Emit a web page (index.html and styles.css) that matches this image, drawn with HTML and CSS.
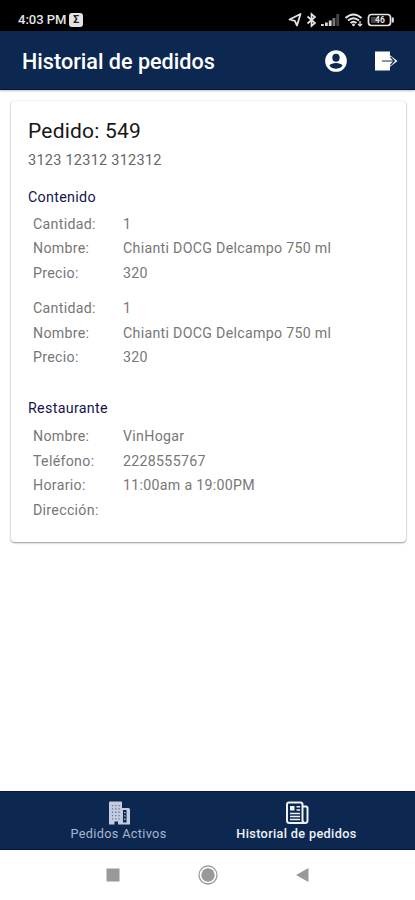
FILE: index.html
```html
<!DOCTYPE html>
<html lang="es">
<head>
    <meta charset="UTF-8">
    <meta name="viewport" content="width=device-width, initial-scale=1.0">
    <title>Historial de pedidos</title>
    <link rel="stylesheet" href="styles.css">
</head>
<body>
    <div class="screen">
        <!-- Status bar -->
        <div class="status-bar">
            <span class="time">4:03 PM</span>
            <span class="badge">Σ</span>
            <svg class="status-icons" width="108" height="16" viewBox="0 0 108 16" fill="none" stroke="#e4e4e4" stroke-width="1.4">
                <path d="M1.500 7.500L12.500 2L9 13.500L6.800 8.800Z" stroke-linejoin="round" stroke-width="1.800"/>
                <path d="M19.500 4.500L27 11L23.500 14V2L27 5L19.500 11.500" stroke-width="1.700"/>
                <g stroke="none" fill="#d8d8d8">
                    <rect x="33" y="12" width="2.800" height="2"/>
                    <rect x="37" y="10.500" width="2.800" height="3.500"/>
                    <rect x="40.800" y="8.500" width="2.800" height="5.500"/>
                    <rect x="44.500" y="6" width="2.800" height="8" fill="#777"/>
                    <rect x="48.300" y="2" width="2.800" height="12" fill="#444"/>
                </g>
                <path d="M57.500 6Q65.500 -1 73.500 6M60 8.500Q65.500 4 71 8.500M62.500 11Q65.500 8.500 68.500 11" stroke-width="2"/>
                <circle cx="65.500" cy="12.800" r="1.400" fill="#e4e4e4" stroke="none"/>
                <path d="M72 9V14M70 12L72 14L74 12" stroke-width="1.200"/>
                <rect x="80.500" y="2.500" width="22" height="11" rx="3" stroke-width="1.700"/>
                <path d="M104.800 5.500V10.500" stroke-width="2"/>
                <rect x="83" y="5" width="7" height="6" fill="#444" stroke="none"/>
                <text class="battery-text" x="92" y="11.200" text-anchor="middle">46</text>
            </svg>
        </div>

        <!-- Header -->
        <header class="header">
            <h1>Historial de pedidos</h1>
            <svg class="icon-user" width="26" height="26" viewBox="0 0 24 24">
                <path fill="#fff" fill-rule="evenodd" d="M12 2a10 10 0 1 0 0 20a10 10 0 0 0 0-20zM12 5.300a3.400 3.700 0 1 1 0 7.400a3.400 3.700 0 0 1 0-7.400zM12 19.200c-2.500 0-4.700-1-6-2.800c.4-1.700 3.800-2.600 6-2.600s5.600.9 6 2.600c-1.300 1.800-3.500 2.800-6 2.800z"/>
            </svg>
            <svg class="icon-exit" width="24" height="20" viewBox="0 0 24 20">
                <path fill="#fff" d="M1 .5H16V19.500H1z"/>
                <path fill="#fff" d="M15 3.500L23.500 10L15 16.500z"/>
                <path fill="none" stroke="#1b2d50" stroke-width="1.200" d="M8 10H20M16.500 6L20.300 10L16.500 14"/>
            </svg>
        </header>

        <!-- Order -->
        <main class="content">
            <div class="card">
                <h2>Pedido: 549</h2>
                <p class="order-code">3123 12312 312312</p>

                <h3>Contenido</h3>
                <dl class="details">
                    <dt>Cantidad:</dt><dd>1</dd>
                    <dt>Nombre:</dt><dd>Chianti DOCG Delcampo 750 ml</dd>
                    <dt>Precio:</dt><dd>320</dd>
                </dl>
                <dl class="details">
                    <dt>Cantidad:</dt><dd>1</dd>
                    <dt>Nombre:</dt><dd>Chianti DOCG Delcampo 750 ml</dd>
                    <dt>Precio:</dt><dd>320</dd>
                </dl>

                <h3 class="restaurant">Restaurante</h3>
                <dl class="details">
                    <dt>Nombre:</dt><dd>VinHogar</dd>
                    <dt>Teléfono:</dt><dd>2228555767</dd>
                    <dt>Horario:</dt><dd>11:00am a 19:00PM</dd>
                    <dt>Dirección:</dt><dd></dd>
                </dl>
            </div>
        </main>

        <!-- Tabs -->
        <nav class="tabs">
            <a class="tab">
                <svg width="24" height="24" viewBox="0 0 24 24">
                    <path fill="#c3cce0" d="M2 1.500Q2 .5 3 .5H14Q15 .5 15 1.500V7H21.500Q23 7 23 8.500V23.500H11V20.500H7.500V23.500H2z"/>
                    <path stroke="#5f7195" stroke-width="1.200" stroke-dasharray="1.300 2" d="M5.500 4V19M8.800 4V19M12 4V19"/>
                    <path fill="#0c2850" d="M16 9H19.500V21.500H16z"/>
                    <path stroke="#c3cce0" stroke-width="1.300" stroke-dasharray="1.300 2" d="M17.800 11V20"/>
                </svg>
                <span>Pedidos Activos</span>
            </a>
            <a class="tab active">
                <svg width="24" height="24" viewBox="0 0 24 24" fill="none" stroke="#f0f2f7" stroke-width="2">
                    <path d="M17.500 20V3.500Q17.500 1.500 15.500 1.500H4Q2 1.500 2 3.500V19.500Q2 22 4.500 22H20Q22.500 22 22.500 19.500V7Q22.500 5.500 21 5.500H18M17.500 19Q17.500 22 20 22"/>
                    <rect x="5" y="5" width="4.500" height="4.500" fill="#f0f2f7" stroke="none"/>
                    <path d="M11.500 5.700H15M11.500 9H15M5 12.500H15M5 15.500H15M5 18.500H15" stroke-width="1.500"/>
                </svg>
                <span>Historial de pedidos</span>
            </a>
        </nav>

        <!-- System navigation -->
        <div class="system-nav">
            <svg width="20" height="20" viewBox="0 0 20 20"><rect x="3.500" y="3.500" width="13" height="13" fill="#999"/></svg>
            <svg width="20" height="20" viewBox="0 0 20 20"><circle cx="10" cy="10" r="9" fill="none" stroke="#999" stroke-width="1.300"/><circle cx="10" cy="10" r="6.700" fill="#999"/></svg>
            <svg width="20" height="20" viewBox="0 0 20 20"><path d="M3 10L15.500 3V17z" fill="#999"/></svg>
        </div>
    </div>
</body>
</html>
```
FILE: styles.css
```css
* {
    margin: 0;
    padding: 0;
    box-sizing: border-box;
}

body {
    font-family: Roboto, "Liberation Sans", sans-serif;
    background-color: #fff;
    color: #777;
}

.screen {
    display: flex;
    flex-direction: column;
    width: 415px;
    height: 900px;
    overflow: hidden;
}

.status-bar {
    display: flex;
    align-items: center;
    height: 31px;
    padding: 8px 19px 0 18px;
    background-color: #000;
    color: #e4e4e4;
}

.time {
    width: 49px;
    font-size: 13px;
    font-weight: 500;
    white-space: nowrap;
}

.badge {
    width: 14px;
    height: 14px;
    margin-left: 2px;
    border-radius: 3px;
    background-color: #e4e4e4;
    color: #222;
    font-size: 11px;
    font-weight: bold;
    line-height: 14px;
    text-align: center;
}

.status-icons {
    margin-left: auto;
}

.battery-text {
    fill: #e4e4e4;
    stroke: none;
    font-size: 8.5px;
    font-weight: bold;
}

.header {
    display: flex;
    align-items: center;
    height: 59px;
    padding: 2px 17px 0 22px;
    background-color: #0c2850;
    border-bottom: 1px solid #08153c;
    box-shadow: 0 1px 2px rgba(0, 0, 0, 0.25);
}

.header h1 {
    color: #fff;
    font-size: 21.6px;
    font-weight: 500;
}

.icon-user {
    margin-left: auto;
}

.icon-exit {
    margin-left: 25px;
}

.content {
    flex: 1;
    padding: 11px 9px 0 11px;
}

.card {
    height: 441px;
    padding: 16px 17px;
    border-radius: 4px;
    background-color: #fff;
    box-shadow: 0 1px 2px rgba(0, 0, 0, 0.4), 0 0 2px rgba(0, 0, 0, 0.1);
}

.card h2 {
    color: #161616;
    font-size: 21px;
    font-weight: 400;
    line-height: 28px;
    letter-spacing: 0.2px;
}

.order-code {
    margin-top: 4px;
    color: #666;
    font-size: 14.5px;
    line-height: 24px;
    letter-spacing: 0.25px;
}

.card h3 {
    margin: 14px 0 5px;
    color: #14144c;
    font-size: 14.3px;
    font-weight: 400;
    line-height: 20px;
    letter-spacing: 0.3px;
}

.card .restaurant {
    margin: 29px 0 6px;
}

.details {
    display: grid;
    grid-template-columns: 90px 1fr;
    grid-auto-rows: 24.4px;
    padding-left: 5px;
    font-size: 14.2px;
    line-height: 24.4px;
    letter-spacing: 0.3px;
}

.details + .details {
    margin-top: 11px;
}

.tabs {
    display: flex;
    justify-content: center;
    height: 59px;
    background-color: #0c2850;
    border-top: 1px solid #08153c;
    border-bottom: 1px solid #08153c;
}

.tab {
    display: flex;
    flex-direction: column;
    align-items: center;
    width: 178px;
    padding-top: 9px;
    color: #aab5ce;
    font-size: 12.7px;
    line-height: 16px;
    letter-spacing: 0.35px;
}

.tab span {
    margin-top: 1px;
}

.active {
    color: #f0f2f7;
    font-weight: 500;
}

.system-nav {
    display: flex;
    justify-content: center;
    align-items: center;
    gap: 75px;
    height: 50px;
}
```
